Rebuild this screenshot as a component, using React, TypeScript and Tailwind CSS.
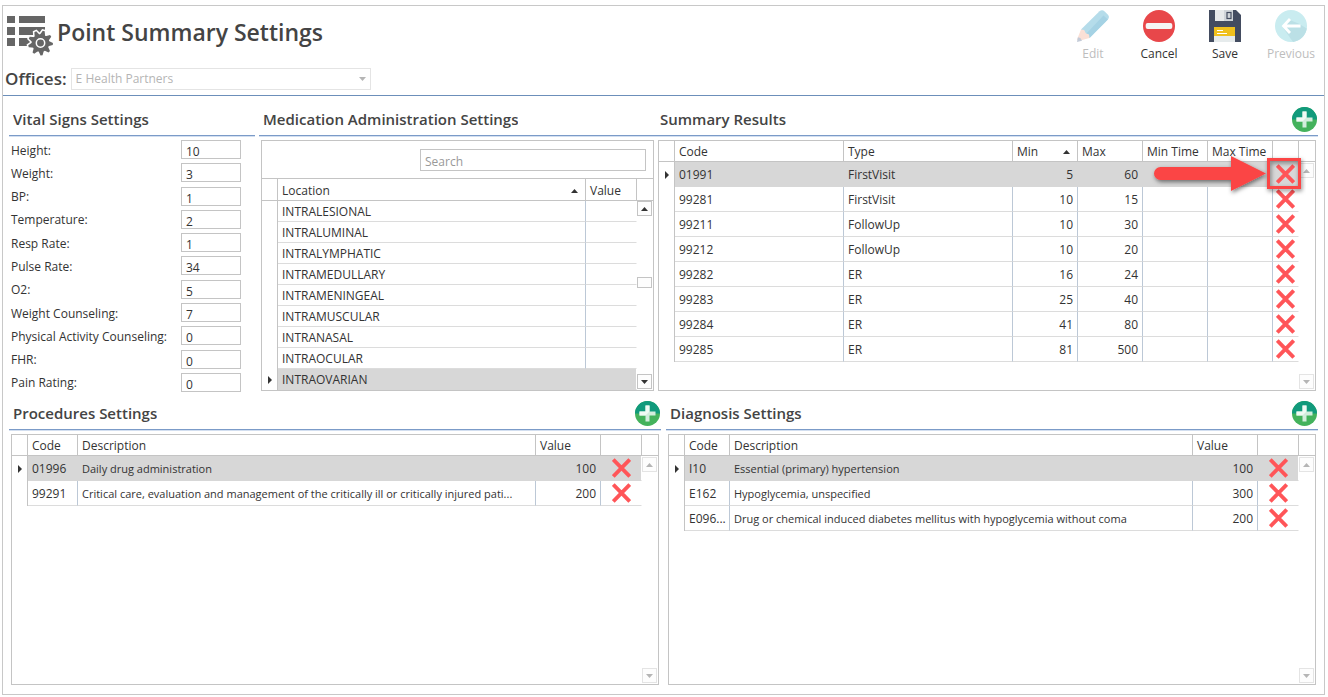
import type { ReactNode } from "react";

type Column = {
  key: string;
  label: string;
  width?: string;
  align?: "right";
  sorted?: boolean;
  small?: boolean;
};

type Row = Record<string, string>;

const VITALS = [
  ["Height", "10"],
  ["Weight", "3"],
  ["BP", "1"],
  ["Temperature", "2"],
  ["Resp Rate", "1"],
  ["Pulse Rate", "34"],
  ["O2", "5"],
  ["Weight Counseling", "7"],
  ["Physical Activity Counseling", "0"],
  ["FHR", "0"],
  ["Pain Rating", "0"],
];

const LOCATION_COLUMNS: Column[] = [
  { key: "location", label: "Location", sorted: true },
  { key: "value", label: "Value", width: "w-[51px]" },
];

const LOCATIONS: Row[] = [
  "INTRALESIONAL",
  "INTRALUMINAL",
  "INTRALYMPHATIC",
  "INTRAMEDULLARY",
  "INTRAMENINGEAL",
  "INTRAMUSCULAR",
  "INTRANASAL",
  "INTRAOCULAR",
  "INTRAOVARIAN",
].map((location) => ({ location, value: "" }));

const SUMMARY_COLUMNS: Column[] = [
  { key: "code", label: "Code" },
  { key: "type", label: "Type" },
  { key: "min", label: "Min", width: "w-[65px]", align: "right", sorted: true },
  { key: "max", label: "Max", width: "w-[65px]", align: "right" },
  { key: "minTime", label: "Min Time", width: "w-[65px]" },
  { key: "maxTime", label: "Max Time", width: "w-[65px]" },
];

const SUMMARY: Row[] = [
  { code: "01991", type: "FirstVisit", min: "5", max: "60" },
  { code: "99281", type: "FirstVisit", min: "10", max: "15" },
  { code: "99211", type: "FollowUp", min: "10", max: "30" },
  { code: "99212", type: "FollowUp", min: "10", max: "20" },
  { code: "99282", type: "ER", min: "16", max: "24" },
  { code: "99283", type: "ER", min: "25", max: "40" },
  { code: "99284", type: "ER", min: "41", max: "80" },
  { code: "99285", type: "ER", min: "81", max: "500" },
];

const PROCEDURE_COLUMNS: Column[] = [
  { key: "code", label: "Code", width: "w-[50px]" },
  { key: "description", label: "Description", small: true },
  { key: "value", label: "Value", width: "w-[65px]", align: "right" },
];

const PROCEDURES: Row[] = [
  { code: "01996", description: "Daily drug administration", value: "100" },
  {
    code: "99291",
    description: "Critical care, evaluation and management of the critically ill or critically injured pati...",
    value: "200",
  },
];

const DIAGNOSIS_COLUMNS: Column[] = [
  { key: "code", label: "Code", width: "w-[45px]" },
  { key: "description", label: "Description", small: true },
  { key: "value", label: "Value", width: "w-[65px]", align: "right" },
];

const DIAGNOSES: Row[] = [
  { code: "I10", description: "Essential (primary) hypertension", value: "100" },
  { code: "E162", description: "Hypoglycemia, unspecified", value: "300" },
  {
    code: "E096...",
    description: "Drug or chemical induced diabetes mellitus with hypoglycemia without coma",
    value: "200",
  },
];

const TEETH = [15, 55, 95, 135, 175, 215, 255, 295, 335];

function ListGearIcon() {
  return (
    <svg width="46" height="42" viewBox="0 0 46 42" className="shrink-0" aria-hidden="true">
      <path d="M0 2h8v7H0zM12 2h26v7H12zM0 13h8v8H0zM12 13h26v8H12zM0 24h8v8H0zM12 24h12v8H12z" fill="#666" />
      <g transform="translate(33.5 29)" fill="#666">
        <g stroke="#fff" strokeWidth="3">
          <circle r="8.5" />
          {TEETH.map((a) => (
            <path key={a} d="M-3 -7L-1 -12.4H1L3 -7z" transform={`rotate(${a})`} />
          ))}
        </g>
        <circle r="8.8" />
        {TEETH.map((a) => (
          <path key={a} d="M-3 -7L-1 -12.4H1L3 -7z" transform={`rotate(${a})`} />
        ))}
        <circle r="4.2" fill="none" stroke="#fff" strokeWidth="1.5" />
      </g>
    </svg>
  );
}

function PencilIcon() {
  return (
    <svg width="32" height="32" viewBox="0 0 32 32" aria-hidden="true">
      <path d="M22.5 1.2a4 4 0 0 1 5.2.2l3 3a4 4 0 0 1 .2 5.2L12.5 28 4 19.5z" fill="#b5dcea" />
      <path d="M26.5 5.5l4.4 4.1L12.5 28l-3.8-3.8z" fill="#a5d2e4" />
      <path d="M4 19.5l3.2.4 1.6 3.3 3.2 1.3.5 3.5L1.5 31 0 29.5z" fill="#fbe0d6" />
      <path d="M.9 27.3L0 32l5-1.2-1.6-2.8z" fill="#c3cbd8" />
    </svg>
  );
}

function CancelIcon() {
  return (
    <svg width="32" height="32" viewBox="0 0 32 32" aria-hidden="true">
      <circle cx="16" cy="16" r="16" fill="#e8474a" />
      <rect x="2.7" y="13" width="26.6" height="6" rx="2" fill="#f5f5f5" />
    </svg>
  );
}

function SaveIcon() {
  return (
    <svg width="32" height="32" viewBox="0 0 32 32" aria-hidden="true">
      <path d="M0 0h27l5 5v27H0z" fill="#434c60" />
      <path d="M6 0h18v11H6z" fill="#cfd4d8" />
      <path d="M6 0h9v11H6z" fill="#e6e9ea" />
      <rect x="18" y="2.5" width="4" height="6" fill="#cfd4d8" stroke="#434c60" strokeWidth="1.2" />
      <path d="M5 17h21v9H5z" fill="#f0c01c" />
      <path d="M5 26h21v6H5z" fill="#e6ebec" />
      <path d="M8 20.5h6M8 23.5h10" stroke="#fff" strokeWidth="1.2" />
    </svg>
  );
}

function PreviousIcon() {
  return (
    <svg width="32" height="32" viewBox="0 0 32 32" aria-hidden="true">
      <circle cx="16" cy="16" r="16" fill="#c9ecf0" />
      <path d="M13.5 9.5l10 4 8.3 5A16 16 0 0 1 18 31.9L7.5 17z" fill="#bbe0e6" />
      <path d="M15 9l-6.5 7 6.5 7M9 16h16.5" fill="none" stroke="#fff" strokeWidth="2.8" />
    </svg>
  );
}

function AddIcon() {
  return (
    <svg width="25" height="25" viewBox="0 0 25 25" aria-hidden="true">
      <circle cx="12.5" cy="12.5" r="12.5" fill="#44b25c" />
      <path d="M0 12.5a12.5 12.5 0 0 1 25 0z" fill="#119a7c" />
      <path d="M10.5 4.5h4v6h6v4h-6v6h-4v-6h-6v-4h6z" fill="#d3eddd" />
      <path d="M10.5 4.5h4v6l-4 4h-6v-4h6z" fill="#f0faf4" />
    </svg>
  );
}

function CrossIcon() {
  return (
    <svg width="19" height="20" viewBox="0 0 19 20" aria-hidden="true">
      <path d="M1.3 1.5l16.4 17M17.7 1.5l-16.4 17" stroke="#ff5558" strokeWidth="3.8" />
    </svg>
  );
}

function Triangle({ down = false }: { down?: boolean }) {
  return (
    <svg width="7" height="4" viewBox="0 0 7 4" fill="currentColor" className="shrink-0" aria-hidden="true">
      <path d={down ? "M0 0h7L3.5 4z" : "M0 4h7L3.5 0z"} />
    </svg>
  );
}

// Red callout pointing at the first delete button.
function Callout() {
  return (
    <svg
      width="160"
      height="52"
      viewBox="0 0 160 52"
      className="pointer-events-none absolute -top-3.5 -right-2 z-10"
      aria-hidden="true"
    >
      <defs>
        <filter id="shadow" x="-10%" y="-20%" width="120%" height="150%">
          <feDropShadow dx="1" dy="2" stdDeviation="2" floodColor="#000" floodOpacity="0.5" />
        </filter>
      </defs>
      <g filter="url(#shadow)">
        <path d="M14.5 17H85V6l35 17.5L85 41V30H14.5a6.500 6.500 0 0 1 0-13z" fill="#fb4444" />
        <rect x="122.500" y="9.500" width="31" height="28" fill="none" stroke="#fb4444" strokeWidth="3" />
      </g>
    </svg>
  );
}

function ToolButton({ label, icon, disabled = false }: { label: string; icon: ReactNode; disabled?: boolean }) {
  return (
    <button
      type="button"
      disabled={disabled}
      className="flex w-[66px] flex-col items-center gap-1 text-[#333] disabled:text-[#bdbdbd]"
    >
      {icon}
      <span className="leading-4">{label}</span>
    </button>
  );
}

function Section({ title, onAdd = false, children }: { title: string; onAdd?: boolean; children: ReactNode }) {
  return (
    <section className="min-w-0">
      <div className="mb-1 flex h-[33px] items-center justify-between border-b border-[#7b9bc8] pr-px pl-1 shadow-[0_1px_0_#d3dff0]">
        <h2 className="truncate text-[15px] font-semibold text-[#444]">{title}</h2>
        {onAdd && (
          <button type="button" aria-label={`Add to ${title}`}>
            <AddIcon />
          </button>
        )}
      </div>
      {children}
    </section>
  );
}

function ScrollButton({ down = false, active = false }: { down?: boolean; active?: boolean }) {
  return (
    <button
      type="button"
      aria-label={down ? "Scroll down" : "Scroll up"}
      disabled={!active}
      className="flex size-[15px] shrink-0 items-center justify-center border border-[#c4c4c4] bg-[#fdfdfd] text-[#333] disabled:border-[#e4e4e4] disabled:text-[#b5b5b5]"
    >
      <Triangle down={down} />
    </button>
  );
}

function DataGrid({
  columns,
  rows,
  selected = 0,
  deleteWidth,
  dense = false,
  callout = false,
}: {
  columns: Column[];
  rows: Row[];
  selected?: number;
  deleteWidth?: string;
  dense?: boolean;
  callout?: boolean;
}) {
  const headHeight = dense ? "h-[22px]" : "h-[21px]";

  return (
    <div className="flex grow items-stretch">
      <div className="min-w-0 grow">
        <table className="w-full table-fixed border-separate border-spacing-0 text-left">
          <thead>
            <tr className={headHeight}>
              <th className="w-4 border-r border-b border-[#c4c4c4] p-0" />
              {columns.map((c) => (
                <th
                  key={c.key}
                  className={"border-r border-b border-[#c4c4c4] pt-0.5 pr-0 pb-0 pl-1 font-normal " + (c.width ?? "")}
                >
                  <div className="flex items-center justify-between pr-[7px] leading-4 whitespace-nowrap">
                    {c.label}
                    {c.sorted && <Triangle />}
                  </div>
                </th>
              ))}
              {deleteWidth && <th className={"border-r border-b border-[#c4c4c4] p-0 " + deleteWidth} />}
            </tr>
          </thead>
          <tbody>
            {rows.map((row, i) => {
              const on = i === selected;
              const line = on ? "border-[#d7d7d7] bg-[#d7d7d7]" : "border-b-[#dcdcdc]";
              return (
                <tr key={i} className={dense ? "h-[21px]" : "h-[25px]"}>
                  <td className="border-r border-[#c4c4c4] p-0">
                    {on && (
                      <svg width="4" height="8" viewBox="0 0 4 8" className="mr-[5px] ml-auto" aria-hidden="true">
                        <path d="M0 0l4 4-4 4z" fill="#333" />
                      </svg>
                    )}
                  </td>
                  {columns.map((c, n) => (
                    <td
                      key={c.key}
                      className={
                        "overflow-hidden border-r border-b pt-0.5 pb-0 pl-1 leading-4 whitespace-nowrap " +
                        (n === columns.length - 1 && !deleteWidth
                          ? "border-r-white "
                          : on
                            ? "border-r-[#d7d7d7] "
                            : "border-r-[#bcc8d6] ") +
                        (c.align ? "pr-1 text-right " : "pr-0.5 ") +
                        (c.small ? "text-[11px] " : "") +
                        line
                      }
                    >
                      {row[c.key]}
                    </td>
                  ))}
                  {deleteWidth && (
                    <td className={"border-r border-b border-r-white p-0 " + line}>
                      <div className="relative flex justify-center">
                        <button type="button" aria-label={`Delete ${row.code}`}>
                          <CrossIcon />
                        </button>
                        {callout && on && <Callout />}
                      </div>
                    </td>
                  )}
                </tr>
              );
            })}
          </tbody>
        </table>
      </div>
      <div className="flex w-4 shrink-0 flex-col">
        <div className={"shrink-0 border-b border-[#c4c4c4] " + headHeight} />
        <div className={"flex grow flex-col justify-between pb-px " + (dense ? "" : "pt-px")}>
          <ScrollButton active={dense} />
          {dense && (
            <>
              <div className="grow-[7]" />
              <div className="h-[11px] w-[15px] border border-[#c4c4c4] bg-[#fdfdfd]" />
              <div className="grow-[10]" />
            </>
          )}
          <ScrollButton down active={dense} />
        </div>
      </div>
    </div>
  );
}

const PANEL = "mx-0.5 flex min-h-[251px] flex-col border border-[#c4c4c4]";

export default function App() {
  return (
    <div className="bg-white pt-[5px] pr-[3px] pb-0.5 pl-0.5 font-['Open_Sans','Noto_Sans',sans-serif] text-[12px] text-[#333]">
      <main className="border border-[#c8c8c8]">
        <header className="flex min-h-[90px] items-start justify-between border-b border-[#6c8fba]">
          <div>
            <div className="flex items-start gap-1 pt-2 pl-1">
              <ListGearIcon />
              <h1 className="text-[23px] leading-9 font-semibold text-[#444]">Point Summary Settings</h1>
            </div>
            <div className="mt-[11px] flex items-center gap-1 pl-0.5">
              <label htmlFor="office" className="text-[17px] leading-6 font-semibold text-[#444]">
                Offices:
              </label>
              <div className="relative w-[300px]">
                <select
                  id="office"
                  disabled
                  className="block h-[22px] w-full appearance-none border border-[#e4e4e4] bg-white px-1 text-[#b5b5b5]"
                >
                  <option>E Health Partners</option>
                </select>
                <span className="pointer-events-none absolute top-[9px] right-[5px] text-[#b5b5b5]">
                  <Triangle down />
                </span>
              </div>
            </div>
          </div>
          <div className="flex pt-1">
            <ToolButton label="Edit" icon={<PencilIcon />} disabled />
            <ToolButton label="Cancel" icon={<CancelIcon />} />
            <ToolButton label="Save" icon={<SaveIcon />} />
            <ToolButton label="Previous" icon={<PreviousIcon />} disabled />
          </div>
        </header>

        <div className="px-1.5 pt-[7px] pb-[9px]">
          <div className="flex">
            <div className="mr-1 w-[246px] shrink-0">
              <Section title="Vital Signs Settings">
                <div className="flex h-[252px] flex-col justify-between pl-0.5">
                  {VITALS.map(([label, value]) => (
                    <div key={label} className="flex h-[19px] items-center">
                      <label htmlFor={label} className="w-[170px] pt-0.5 leading-5">
                        {label}:
                      </label>
                      <input
                        id={label}
                        defaultValue={value}
                        className="h-[19px] w-[60px] border border-[#c4c4c4] px-1 pt-1 leading-4 outline-none"
                      />
                    </div>
                  ))}
                </div>
              </Section>
            </div>

            <div className="w-[397px] shrink-0">
              <Section title="Medication Administration Settings">
                <div className={PANEL}>
                  <div className="flex justify-end border-b border-[#c4c4c4] pt-2 pr-[7px] pb-[7px]">
                    <input
                      type="search"
                      aria-label="Search"
                      placeholder="Search"
                      className="h-[22px] w-[226px] border border-[#c4c4c4] px-1 pt-0.5 outline-none placeholder:text-[#999]"
                    />
                  </div>
                  <DataGrid columns={LOCATION_COLUMNS} rows={LOCATIONS} selected={8} dense />
                </div>
              </Section>
            </div>

            <div className="min-w-0 grow">
              <Section title="Summary Results" onAdd>
                <div className={PANEL}>
                  <DataGrid columns={SUMMARY_COLUMNS} rows={SUMMARY} deleteWidth="w-[26px]" callout />
                </div>
              </Section>
            </div>
          </div>

          <div className="mt-[5px] grid grid-cols-2 gap-[5px]">
            <Section title="Procedures Settings" onAdd>
              <div className={PANEL}>
                <DataGrid columns={PROCEDURE_COLUMNS} rows={PROCEDURES} deleteWidth="w-[41px]" />
              </div>
            </Section>
            <Section title="Diagnosis Settings" onAdd>
              <div className={PANEL}>
                <DataGrid columns={DIAGNOSIS_COLUMNS} rows={DIAGNOSES} deleteWidth="w-[41px]" />
              </div>
            </Section>
          </div>
        </div>
      </main>
    </div>
  );
}
